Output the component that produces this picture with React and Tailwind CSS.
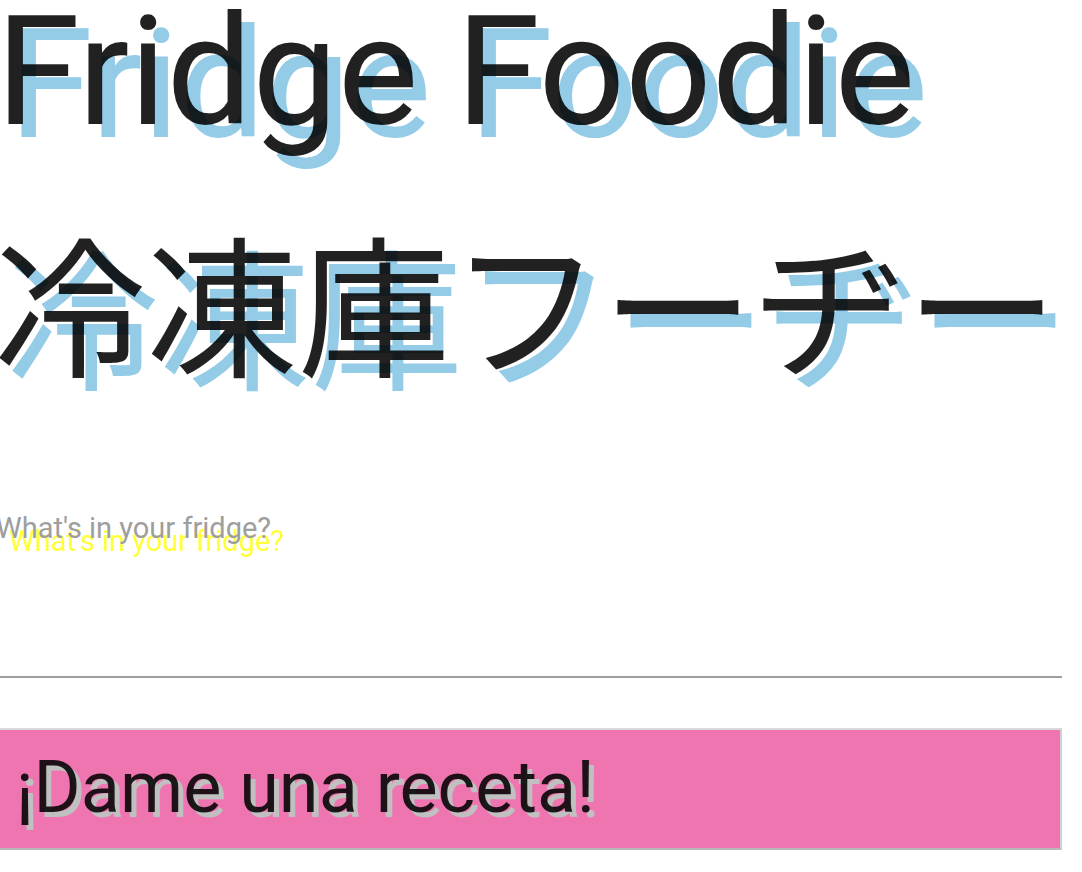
export default function App() {
  return (
    <main className="min-h-screen overflow-x-hidden bg-white pr-5 font-['Roboto','Noto_Sans_CJK_JP',sans-serif] text-black/87">
      <h1 className="whitespace-nowrap text-[152px] [text-shadow:13px_13px_0_#94cce8]">
        <span className="-ml-1 block leading-36">Fridge Foodie</span>
        <span className="-ml-1.5 mt-14 block leading-[228px]" lang="ja">冷凍庫フーヂー</span>
      </h1>
      <form className="mt-20" onSubmit={(e) => e.preventDefault()}>
        <label htmlFor="fridge" className="-ml-1 block text-[29px] leading-10 text-[#9e9e9e] [text-shadow:13px_13px_0_#ffff3b]">What's in your fridge?</label>
        <input id="fridge" type="text" className="block h-[130px] w-full border-b-2 border-[#9e9e9e] outline-none" />
        <button type="submit" className="mt-[50px] block w-full border-y-2 border-r-2 border-t-[#d8d8d8] border-r-[#d0d0d0] border-b-[#b8b8b8] bg-[#ef75b1] pb-0.5 pl-4 text-left text-[72px] leading-[116px] [text-shadow:5px_5px_0_#c0c0c0]">¡Dame una receta!</button>
      </form>
    </main>
  );
}
